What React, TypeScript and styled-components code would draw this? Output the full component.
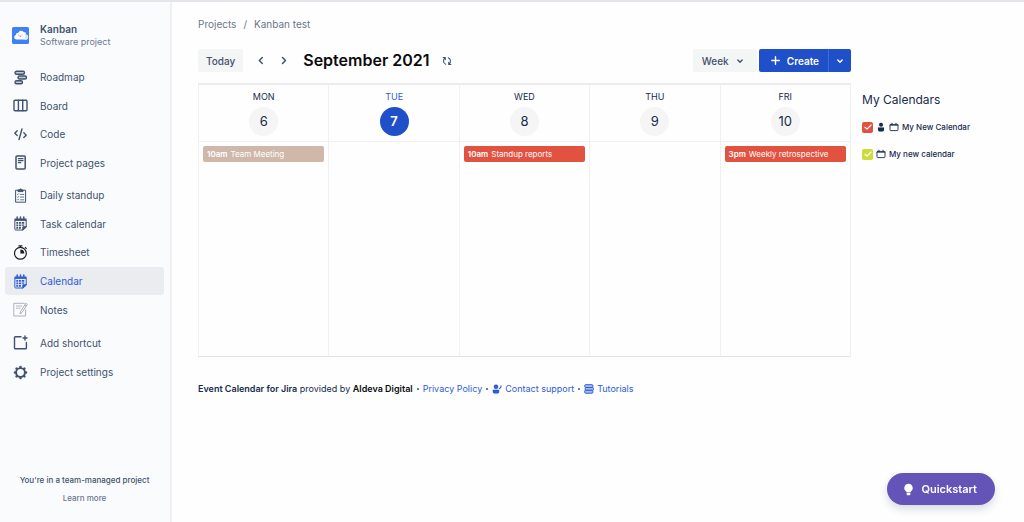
import React from "react";
import styled, { createGlobalStyle, css } from "styled-components";

const color = {
  navy: "#172b4d",
  slate: "#42526e",
  muted: "#6b778c",
  blue: "#1f4fc9",
  link: "#2f5bd6",
  red: "#e25241",
  tan: "#cfb8a9",
  lime: "#cddc39",
  grey: "#f4f5f5",
  line: "#f0f0f1",
};

const GlobalStyle = createGlobalStyle`
  * { box-sizing: border-box; }
  body {
    margin: 0;
    background: #fefefe;
    color: ${color.navy};
    font-family: Inter, "Liberation Sans", sans-serif;
    font-size: 10px;
    line-height: 14px;
  }
  button, select, input { font: inherit; color: inherit; margin: 0; }
  a { color: inherit; text-decoration: none; }
  svg { display: block; flex: none; }
`;

/* ---------- layout ---------- */

const Page = styled.div`
  display: flex;
  min-height: 100vh;
  border-top: 2px solid #e4e4ea;
`;

const Sidebar = styled.aside`
  display: flex;
  flex-direction: column;
  flex: none;
  width: 172px;
  padding: 21px 6px 15px 5px;
  background: #fafbfc;
  border-right: 2px solid #f0f0f2;
`;

const Main = styled.main`
  flex: 1;
  min-width: 0;
  padding: 15px 12px 24px 26px;
`;

const Columns = styled.div`
  display: flex;
  gap: 11px;
`;

const CalendarColumn = styled.section`
  flex: 1;
  min-width: 0;
`;

const CalendarsPanel = styled.aside`
  flex: none;
  width: 150px;
  padding-top: 41px;
`;

/* ---------- sidebar ---------- */

const ProjectHeader = styled.header`
  display: flex;
  align-items: center;
  gap: 11px;
  padding: 0 7px;
`;

const ProjectName = styled.h2`
  margin: 0;
  font-size: 10px;
  line-height: 13px;
  font-weight: 600;
  color: ${color.slate};
`;

const ProjectType = styled.p`
  margin: 0;
  font-size: 9px;
  line-height: 12px;
  color: ${color.muted};
`;

const Nav = styled.nav`
  display: flex;
  flex-direction: column;
  gap: 4px;
  margin-top: 15px;
`;

const NavGroup = styled.ul<{ $height: number }>`
  display: grid;
  grid-auto-rows: 1fr;
  min-height: ${(p) => p.$height}px;
  margin: 0;
  padding: 0;
  list-style: none;
`;

const NavLink = styled.a<{ $active?: boolean }>`
  display: flex;
  align-items: center;
  gap: 12px;
  height: 100%;
  padding: 0 8px;
  border-radius: 3px;
  color: ${color.slate};
  ${(p) =>
    p.$active &&
    css`
      background: #ebecf0;
      color: ${color.link};
    `}
`;

const SidebarFooter = styled.footer`
  margin-top: auto;
  padding-top: 24px;
  text-align: center;
  font-size: 8px;
  line-height: 18px;
  font-weight: 500;
  color: ${color.slate};
`;

const LearnMore = styled.a`
  display: block;
  color: ${color.muted};
`;

/* ---------- toolbar ---------- */

const Breadcrumbs = styled.nav`
  display: flex;
  gap: 7px;
  margin-bottom: 18px;
  color: ${color.muted};
`;

const Toolbar = styled.div`
  display: flex;
  align-items: center;
  height: 23px;
  margin-bottom: 11px;
`;

const Button = styled.button`
  height: 23px;
  padding: 0 8px;
  border: 0;
  border-radius: 2px;
  background: ${color.grey};
  color: ${color.slate};
  font-weight: 500;
`;

const IconButton = styled.button`
  display: grid;
  place-items: center;
  width: 23px;
  height: 23px;
  padding: 0;
  border: 0;
  background: none;
  color: ${color.slate};
`;

const Arrows = styled.div`
  display: flex;
  margin: 0 8px 0 6px;
`;

const Title = styled.h1`
  margin: 0 6px 0 0;
  font-size: 16px;
  line-height: 23px;
  font-weight: 600;
  color: #0b0b0d;
`;

const ViewPicker = styled.div`
  display: grid;
  align-items: center;
  width: 64px;
  margin: 0 2px 0 auto;
  border-radius: 2px;
  background: ${color.grey};
  color: ${color.slate};
  > * { grid-area: 1 / 1; }
  > svg { justify-self: end; margin-right: 13px; pointer-events: none; }
`;

const ViewSelect = styled.select`
  appearance: none;
  width: 100%;
  height: 23px;
  padding: 0 8px 0 9px;
  border: 0;
  background: none;
  font-weight: 500;
`;

const CreateGroup = styled.div`
  display: flex;
  border-radius: 2px;
  overflow: hidden;
`;

const CreateButton = styled(Button)`
  display: flex;
  align-items: center;
  gap: 7px;
  padding: 0 9px 0 12px;
  border-radius: 0;
  background: ${color.blue};
  color: #fff;
  font-weight: 600;
`;

const CreateMenu = styled(IconButton)`
  background: ${color.blue};
  border-left: 1px solid #3f6bdb;
  color: #fff;
`;

/* ---------- week grid ---------- */

const Week = styled.table`
  width: 100%;
  table-layout: fixed;
  border-collapse: separate;
  border-spacing: 0;
  border-top: 2px solid #ececee;
  border-right: 1px solid ${color.line};
`;

const DayHead = styled.th<{ $today?: boolean }>`
  padding: 5px 0;
  border-left: 1px solid ${color.line};
  border-bottom: 1px solid ${color.line};
  font-weight: 400;
  font-size: 9px;
  line-height: 14px;
  color: ${(p) => (p.$today ? color.link : color.navy)};
`;

const DayNumber = styled.div<{ $today?: boolean }>`
  width: 29px;
  height: 29px;
  margin: 3px auto 0;
  border-radius: 50%;
  background: ${(p) => (p.$today ? color.blue : "#f5f5f5")};
  color: ${(p) => (p.$today ? "#fff" : color.navy)};
  font-size: 13px;
  line-height: 29px;
  font-weight: ${(p) => (p.$today ? 600 : 400)};
`;

const DayCell = styled.td`
  height: 215px;
  padding: 4px;
  border-left: 1px solid ${color.line};
  border-bottom: 1px solid #e2e2e4;
  vertical-align: top;
`;

const EventButton = styled.button<{ $color: string }>`
  display: flex;
  align-items: center;
  gap: 3px;
  width: 100%;
  height: 16px;
  padding: 0 4px;
  border: 0;
  border-radius: 2px;
  background: ${(p) => p.$color};
  color: #fff;
  font-size: 8px;
  line-height: 16px;
  white-space: nowrap;
`;

const EventTime = styled.span`
  font-weight: 600;
`;

/* ---------- calendar list ---------- */

const PanelTitle = styled.h2`
  margin: 0 0 10px;
  font-size: 12px;
  line-height: 20px;
  font-weight: 400;
`;

const CalendarList = styled.ul`
  display: grid;
  gap: 13px;
  margin: 0;
  padding: 0;
  list-style: none;
`;

const CalendarLabel = styled.label`
  display: flex;
  align-items: center;
  gap: 3px;
  font-size: 8px;
  font-weight: 500;
`;

const CheckWrap = styled.span`
  display: grid;
  place-items: center;
  > * { grid-area: 1 / 1; }
  > svg { pointer-events: none; }
`;

const Check = styled.input<{ $color: string }>`
  appearance: none;
  width: 11px;
  height: 11px;
  border-radius: 2px;
  background: ${(p) => p.$color};
`;

/* ---------- page footer and floating button ---------- */

const Credits = styled.footer`
  display: flex;
  flex-wrap: wrap;
  align-items: center;
  gap: 3px;
  margin-top: 25px;
  font-size: 9px;
  a { display: flex; align-items: center; gap: 3px; color: ${color.link}; }
  strong { font-weight: 600; }
`;

const Dot = styled.span`
  width: 2px;
  height: 2px;
  margin: 0 1px;
  border-radius: 50%;
  background: ${color.slate};
`;

const Vendor = styled.strong`
  color: #0b0b0d;
`;

const Quickstart = styled.button`
  position: fixed;
  right: 29px;
  bottom: 17px;
  display: flex;
  align-items: center;
  gap: 7px;
  height: 32px;
  padding: 0 18px 0 16px;
  border: 0;
  border-radius: 16px;
  background: #6554b8;
  color: #fff;
  font-size: 11px;
  font-weight: 600;
  box-shadow: 0 4px 8px rgba(9, 30, 66, 0.16);
`;

/* ---------- icons ---------- */

type IconProps = { size?: number; children: React.ReactNode; stroke?: number };

const Icon = ({ size = 15, stroke = 1.4, children }: IconProps) => (
  <svg
    width={size}
    height={size}
    viewBox={`0 0 ${size} ${size}`}
    fill="none"
    stroke="currentColor"
    strokeWidth={stroke}
    strokeLinecap="round"
    strokeLinejoin="round"
    aria-hidden="true"
  >
    {children}
  </svg>
);

const ProjectLogo = () => (
  <svg width="17" height="17" viewBox="0 0 17 17" aria-hidden="true">
    <rect width="17" height="17" rx="1.5" fill="#3f80f6" />
    <path
      d="M4.4 12.6a2.4 2.4 0 0 1-.5-4.7 2.1 2.1 0 0 1 2.5-2.2 3 3 0 0 1 5.2-.8 2.3 2.3 0 0 1 2.5 2.8 2.5 2.5 0 0 1-1 4.9z"
      fill="#fff"
    />
    <path d="M11.6 4.9a2.3 2.3 0 0 1 2.5 2.8 2.5 2.5 0 0 1-1 4.9h-1.3c1.5-1.4 1.7-4.7-.2-7.7z" fill="#dbe6fa" />
    <circle cx="6.6" cy="8" r=".5" fill="#8a8fa3" />
    <circle cx="10" cy="8" r=".5" fill="#8a8fa3" />
    <path d="M7.3 8.8h2l-1 1.4z" fill="#e2574c" />
  </svg>
);

const RoadmapIcon = () => (
  <Icon>
    <g fill="#c3c9d4">
      <rect x="2" y="1.2" width="9.5" height="3" rx="1.5" />
      <rect x="5" y="6" width="8.5" height="3" rx="1.5" />
      <rect x="2" y="10.8" width="7.5" height="3" rx="1.5" />
    </g>
  </Icon>
);

const BoardIcon = () => (
  <Icon>
    <rect x="1" y="2.2" width="13" height="10.6" rx="1" />
    <path d="M5.4 2.2v10.6M9.7 2.2v10.6" />
  </Icon>
);

const CodeIcon = () => (
  <Icon>
    <path d="M4.2 3.8 1.8 6.2l2.4 2.4M10.8 5.8l2.4 2.4-2.4 2.4M9 2 6 12.5" />
  </Icon>
);

const PagesIcon = () => (
  <Icon stroke={1.5}>
    <rect x="3" y=".9" width="9.2" height="13.2" rx="1" />
    <path d="M5.4 3.7h4.6M5.4 5.7h4.6M5.4 7.7h2.4" strokeWidth="1.2" />
  </Icon>
);

const ClipboardIcon = () => (
  <Icon stroke={1}>
    <path d="M5 2.2H2.6v12h10v-12H10" />
    <path d="M5 3.2V1.9h1.3a1.3 1.3 0 0 1 2.5 0H10v1.3z" fill="currentColor" />
    <path d="m4.2 6.2.6.6.9-1.1M4.200 8.900l.6.6.9-1.100M4.200 11.600l.6.6.9-1.100" strokeWidth=".7" />
    <path d="M7.5 6.400h3.300M7.500 9.100h3.300M7.500 11.800h3.300" strokeWidth=".8" />
  </Icon>
);

const CalendarGridIcon = () => (
  <Icon stroke={1}>
    <path d="M9.6 14H2.8a1 1 0 0 1-1-1L1.900 4h11.300v6.600z" />
    <path d="M1.5 2.5h12v2.300h-12z" fill="currentColor" stroke="none" />
    <path d="M4.2 1v2M7.500 1v2M10.800 1v2" strokeWidth="1.5" />
    <path d="M9.800 13.800v-3h3.300z" fill="currentColor" />
    <path
      d="M3.3 6h1.9v1.8H3.3zM6 6h1.9v1.8H6zM8.7 6h2.5v1.8H8.700zM3.300 8.500h1.900v1.700H3.300zM6 8.500h1.900v1.700H6zM8.700 8.500h2.500v1.300H8.700zM3.300 11h1.900v1.700H3.300zM6 11h1.900v1.700H6z"
      fill="currentColor"
      stroke="none"
    />
  </Icon>
);

const StopwatchIcon = () => (
  <svg width="15" height="15" viewBox="0 0 15 15" fill="none" stroke="#1d1d22" strokeWidth="1.2" aria-hidden="true">
    <circle cx="7.4" cy="8.3" r="5.9" />
    <path d="M5.400.8h4M7.400.8v1.700M12 2.200l1.600 1.600" />
    <path d="M7.400 4.500v3.900h3.900a3.900 3.900 0 0 0-3.900-3.900z" fill="#1d1d22" stroke="none" />
  </svg>
);

const NotesIcon = () => (
  <svg width="15" height="15" viewBox="0 0 15 15" fill="none" stroke="#a6a9b0" strokeWidth=".9" aria-hidden="true">
    <path d="M12.600 7.500V14H.8V1.300h11" />
    <path d="M3 4h6M3 6.200h4.600" strokeWidth=".8" />
    <path d="M12.900 1.300l1.500 1-5.400 8.200-2 1.400.5-2.400zM11.700 3.100l1.500 1" stroke="#9a9da5" strokeWidth=".8" />
  </svg>
);

const ShortcutIcon = () => (
  <Icon>
    <path d="M8 1.800H2.300a.8.8 0 0 0-.8.8v10.300c0 .5.3.8.8.8h10.300c.5 0 .8-.3.8-.8V7.500" />
    <path d="M12 1v4M10 3h4" />
  </Icon>
);

const GearIcon = () => (
  <Icon>
    <circle cx="7.5" cy="7.5" r="4.400" strokeWidth="1.9" />
    <path
      d="M7.500 2.300V2M7.500 13v-.3M2.300 7.500H2M13 7.500h-.3M3.900 3.900l-.3-.3M11.400 11.400l-.3-.3M3.900 11.100l-.3.3M11.400 3.600l-.3.3"
      strokeWidth="2.600"
    />
  </Icon>
);

const ChevronLeft = () => (
  <Icon size={9} stroke={1.5}>
    <path d="m6.300 1.500-3 3 3 3" />
  </Icon>
);

const ChevronRight = () => (
  <Icon size={9} stroke={1.5}>
    <path d="m3.500 1.500 3 3-3 3" />
  </Icon>
);

const ChevronDown = () => (
  <Icon size={8} stroke={1.4}>
    <path d="m1.800 3 2.200 2.200L6.200 3" />
  </Icon>
);

const PlusIcon = () => (
  <Icon size={9} stroke={1.4}>
    <path d="M4.500.7v7.600M.7 4.500h7.600" />
  </Icon>
);

const RefreshIcon = () => (
  <Icon size={10} stroke={1.1}>
    <path d="M3.700 8.300C1 7.400.9 3.300 3 1.800M1.200 1.500h2.100v2.100" />
    <path d="M6.300 1.700C9 2.600 9.100 6.700 7 8.200M8.800 8.500H6.700V6.400" />
  </Icon>
);

const CheckIcon = () => (
  <svg width="10" height="10" viewBox="0 0 9 9" fill="none" stroke="#fff" strokeWidth="1" strokeLinecap="round" strokeLinejoin="round" aria-hidden="true">
    <path d="m1.800 4.700 1.800 1.700 3.700-3.700" />
  </svg>
);

const PersonIcon = () => (
  <Icon size={10} stroke={0.1}>
    <circle cx="5" cy="2.700" r="2" fill="currentColor" />
    <path d="M2 5.500h6v2.700c0 .8-1.300 1.300-3 1.300s-3-.5-3-1.300z" fill="currentColor" />
  </Icon>
);

const SmallCalendarIcon = () => (
  <Icon size={10} stroke={0.9}>
    <rect x="1" y="2.400" width="8" height="6.200" rx=".8" />
    <path d="M1 3.200h8M3 1.200v1.200M7 1.200v1.200" />
  </Icon>
);

const SupportIcon = () => (
  <Icon size={10} stroke={0.1}>
    <circle cx="4" cy="2.700" r="2.200" fill="currentColor" />
    <path d="M.8 5.700h6.400v2.500c0 .8-1.300 1.300-3.200 1.300S.8 9 .8 8.200z" fill="currentColor" />
    <path d="M7.400 4.600c1-.4 1.700-1.400 1.700-2.900" strokeWidth="1.1" />
  </Icon>
);

const BooksIcon = () => (
  <svg width="10" height="10" viewBox="0 0 10 10" fill="#a9bdf0" stroke="currentColor" strokeWidth="1" strokeLinejoin="round" aria-hidden="true">
    <rect x=".7" y=".7" width="8.2" height="2.8" rx=".9" />
    <rect x="1.2" y="3.5" width="8.2" height="2.8" rx=".9" />
    <rect x=".7" y="6.3" width="8.2" height="2.9" rx=".9" />
  </svg>
);

const BulbIcon = () => (
  <svg width="11" height="13" viewBox="0 0 11 13" fill="#fff" aria-hidden="true">
    <path d="M5.500.7a4.200 4.200 0 0 0-2.300 7.700c.3.200.4.500.4.900h3.800c0-.4.100-.7.4-.9A4.200 4.200 0 0 0 5.500.7z" />
    <path d="M3.600 9.800h3.800v1.200c0 .8-.6 1.300-1.300 1.300H4.900c-.7 0-1.300-.5-1.300-1.300z" />
  </svg>
);

/* ---------- data ---------- */

type NavItem = { label: string; icon: React.ReactNode; active?: boolean };

const navGroups: { height: number; items: NavItem[] }[] = [
  {
    height: 114,
    items: [
      { label: "Roadmap", icon: <RoadmapIcon /> },
      { label: "Board", icon: <BoardIcon /> },
      { label: "Code", icon: <CodeIcon /> },
      { label: "Project pages", icon: <PagesIcon /> },
    ],
  },
  {
    height: 143,
    items: [
      { label: "Daily standup", icon: <ClipboardIcon /> },
      { label: "Task calendar", icon: <CalendarGridIcon /> },
      { label: "Timesheet", icon: <StopwatchIcon /> },
      { label: "Calendar", icon: <CalendarGridIcon />, active: true },
      { label: "Notes", icon: <NotesIcon /> },
    ],
  },
  {
    height: 59,
    items: [
      { label: "Add shortcut", icon: <ShortcutIcon /> },
      { label: "Project settings", icon: <GearIcon /> },
    ],
  },
];

type Day = {
  name: string;
  date: number;
  today?: boolean;
  event?: { time: string; title: string; color: string };
};

const days: Day[] = [
  { name: "MON", date: 6, event: { time: "10am", title: "Team Meeting", color: color.tan } },
  { name: "TUE", date: 7, today: true },
  { name: "WED", date: 8, event: { time: "10am", title: "Standup reports", color: color.red } },
  { name: "THU", date: 9 },
  { name: "FRI", date: 10, event: { time: "3pm", title: "Weekly retrospective", color: color.red } },
];

const calendars = [
  { name: "My New Calendar", color: color.red, personal: true },
  { name: "My new calendar", color: color.lime, personal: false },
];

/* ---------- page ---------- */

export default function App() {
  return (
    <>
      <GlobalStyle />
      <Page>
        <Sidebar>
          <ProjectHeader>
            <ProjectLogo />
            <div>
              <ProjectName>Kanban</ProjectName>
              <ProjectType>Software project</ProjectType>
            </div>
          </ProjectHeader>
          <Nav aria-label="Project">
            {navGroups.map((group) => (
              <NavGroup key={group.height} $height={group.height}>
                {group.items.map((item) => (
                  <li key={item.label}>
                    <NavLink href="#" $active={item.active} aria-current={item.active ? "page" : undefined}>
                      {item.icon}
                      {item.label}
                    </NavLink>
                  </li>
                ))}
              </NavGroup>
            ))}
          </Nav>
          <SidebarFooter>
            You're in a team-managed project
            <LearnMore href="#">Learn more</LearnMore>
          </SidebarFooter>
        </Sidebar>

        <Main>
          <Breadcrumbs aria-label="Breadcrumb">
            <a href="#">Projects</a>
            <span>/</span>
            <a href="#">Kanban test</a>
          </Breadcrumbs>

          <Columns>
            <CalendarColumn>
              <Toolbar>
                <Button>Today</Button>
                <Arrows>
                  <IconButton aria-label="Previous week">
                    <ChevronLeft />
                  </IconButton>
                  <IconButton aria-label="Next week">
                    <ChevronRight />
                  </IconButton>
                </Arrows>
                <Title>September 2021</Title>
                <IconButton aria-label="Refresh">
                  <RefreshIcon />
                </IconButton>
                <ViewPicker>
                  <ViewSelect aria-label="View" defaultValue="Week">
                    <option>Week</option>
                  </ViewSelect>
                  <ChevronDown />
                </ViewPicker>
                <CreateGroup>
                  <CreateButton>
                    <PlusIcon />
                    Create
                  </CreateButton>
                  <CreateMenu aria-label="More create options">
                    <ChevronDown />
                  </CreateMenu>
                </CreateGroup>
              </Toolbar>

              <Week>
                <thead>
                  <tr>
                    {days.map((day) => (
                      <DayHead key={day.name} scope="col" $today={day.today}>
                        {day.name}
                        <DayNumber $today={day.today}>{day.date}</DayNumber>
                      </DayHead>
                    ))}
                  </tr>
                </thead>
                <tbody>
                  <tr>
                    {days.map((day) => (
                      <DayCell key={day.name}>
                        {day.event && (
                          <EventButton $color={day.event.color}>
                            <EventTime>{day.event.time}</EventTime>
                            {day.event.title}
                          </EventButton>
                        )}
                      </DayCell>
                    ))}
                  </tr>
                </tbody>
              </Week>

              <Credits>
                <span>
                  <strong>Event Calendar for Jira</strong> provided by <Vendor>Aldeva Digital</Vendor>
                </span>
                <Dot />
                <a href="#">Privacy Policy</a>
                <Dot />
                <a href="#">
                  <SupportIcon />
                  Contact support
                </a>
                <Dot />
                <a href="#">
                  <BooksIcon />
                  Tutorials
                </a>
              </Credits>
            </CalendarColumn>

            <CalendarsPanel>
              <PanelTitle>My Calendars</PanelTitle>
              <CalendarList>
                {calendars.map((calendar) => (
                  <li key={calendar.name}>
                    <CalendarLabel>
                      <CheckWrap>
                        <Check type="checkbox" defaultChecked $color={calendar.color} />
                        <CheckIcon />
                      </CheckWrap>
                      {calendar.personal && <PersonIcon />}
                      <SmallCalendarIcon />
                      {calendar.name}
                    </CalendarLabel>
                  </li>
                ))}
              </CalendarList>
            </CalendarsPanel>
          </Columns>
        </Main>
      </Page>
      <Quickstart>
        <BulbIcon />
        Quickstart
      </Quickstart>
    </>
  );
}
